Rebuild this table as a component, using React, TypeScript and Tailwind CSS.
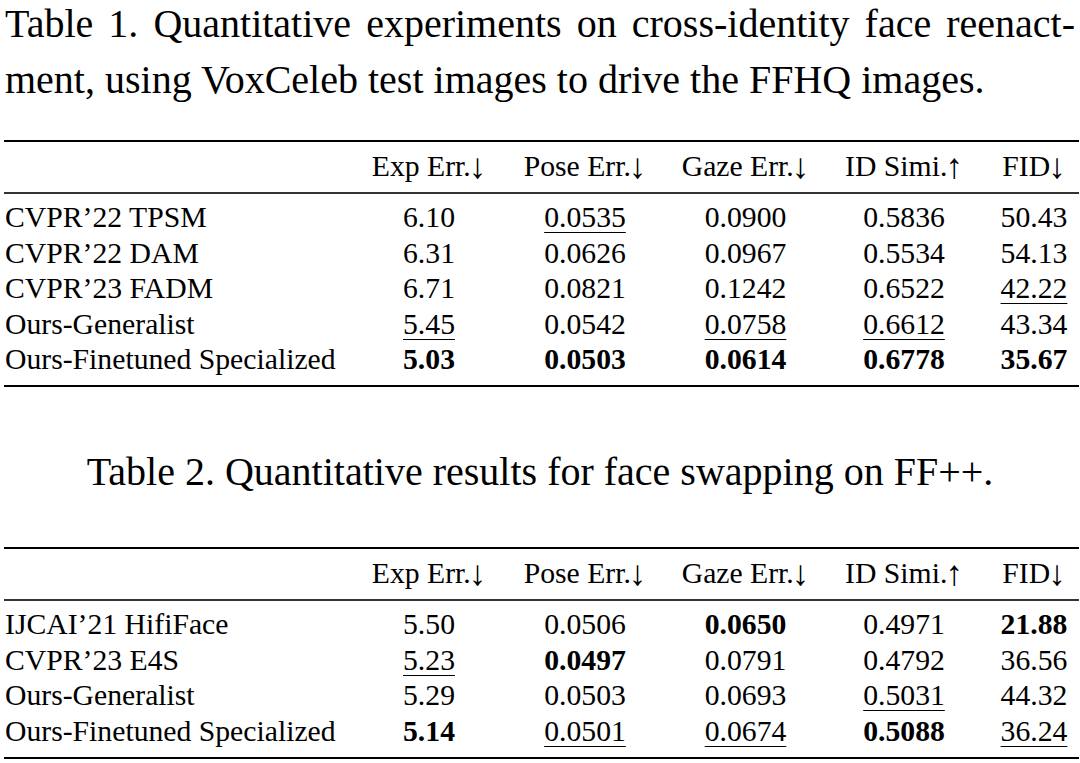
import React from "react";

type Table = { header: [string, string][]; rows: { name: string; cells: string[] }[] };

const header: [string, string][] = [
  ["Exp Err.", "↓"],
  ["Pose Err.", "↓"],
  ["Gaze Err.", "↓"],
  ["ID Simi.", "↑"],
  ["FID", "↓"],
];

const t1: Table = {
  header,
  rows: [
    { name: "CVPR’22 TPSM", cells: ["6.10", "_0.0535", "0.0900", "0.5836", "50.43"] },
    { name: "CVPR’22 DAM", cells: ["6.31", "0.0626", "0.0967", "0.5534", "54.13"] },
    { name: "CVPR’23 FADM", cells: ["6.71", "0.0821", "0.1242", "0.6522", "_42.22"] },
    { name: "Ours-Generalist", cells: ["_5.45", "0.0542", "_0.0758", "_0.6612", "43.34"] },
    { name: "Ours-Finetuned Specialized", cells: ["*5.03", "*0.0503", "*0.0614", "*0.6778", "*35.67"] },
  ],
};

const t2: Table = {
  header,
  rows: [
    { name: "IJCAI’21 HifiFace", cells: ["5.50", "0.0506", "*0.0650", "0.4971", "*21.88"] },
    { name: "CVPR’23 E4S", cells: ["_5.23", "*0.0497", "0.0791", "0.4792", "36.56"] },
    { name: "Ours-Generalist", cells: ["5.29", "0.0503", "0.0693", "_0.5031", "44.32"] },
    { name: "Ours-Finetuned Specialized", cells: ["*5.14", "_0.0501", "_0.0674", "*0.5088", "_36.24"] },
  ],
};

const grid = "grid grid-cols-[356px_138px_174px_147px_170px_90px]";

function Cell({ v }: { v: string }) {
  if (v.startsWith("*")) return <span className="font-bold">{v.slice(1)}</span>;
  if (v.startsWith("_"))
    return (
      <span className="underline decoration-[1px] underline-offset-[5px] [text-decoration-skip-ink:none]">
        {v.slice(1)}
      </span>
    );
  return <span>{v}</span>;
}

function DataTable({ t }: { t: Table }) {
  return (
    <div className="ml-[4px] w-[1075px] text-[29.7px] leading-[35.5px]">
      <div className="border-t-2 border-black" />
      <div className={`${grid} pt-[7px] pb-[7.5px]`}>
        <div />
        {t.header.map(([h, a]) => (
          <div key={h} className="text-center whitespace-nowrap">
            {h}
            <span className="relative top-[2px] -ml-[2px] text-[35px] leading-[0]">{a}</span>
          </div>
        ))}
      </div>
      <div className="border-t-2 border-[#333]" />
      <div className="pt-[6px] pb-[7.5px]">
        {t.rows.map((r) => (
          <div key={r.name} className={grid}>
            <div className="pl-[1px] whitespace-nowrap">{r.name}</div>
            {r.cells.map((c, i) => (
              <div key={i} className="text-center">
                <Cell v={c} />
              </div>
            ))}
          </div>
        ))}
      </div>
      <div className="border-t-2 border-black" />
    </div>
  );
}

export default function App() {
  return (
    <div className="w-[1080px] h-[763px] overflow-hidden bg-white text-black font-['Liberation_Serif','Times_New_Roman',serif]">
      <div className="ml-[5px] w-[1070px] -mt-[4px] text-[40px] leading-[56px]">
        <div className="text-justify [text-align-last:justify]">
          Table 1. Quantitative experiments on cross-identity face reenact-
        </div>
        <div>ment, using VoxCeleb test images to drive the FFHQ images.</div>
      </div>
      <div className="mt-[32px]">
        <DataTable t={t1} />
      </div>
      <div className="mt-[57px] text-center text-[40px] leading-[56px]">
        Table 2. Quantitative results for face swapping on FF++.
      </div>
      <div className="mt-[47px]">
        <DataTable t={t2} />
      </div>
    </div>
  );
}
